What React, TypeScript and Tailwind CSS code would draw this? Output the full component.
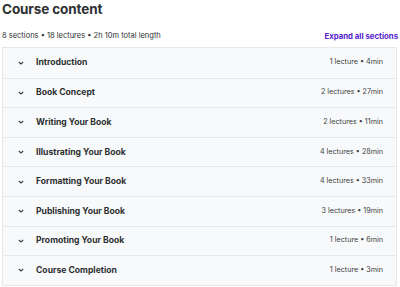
import React from "react";

const sections = [
  ["Introduction", "1 lecture • 4min"],
  ["Book Concept", "2 lectures • 27min"],
  ["Writing Your Book", "2 lectures • 11min"],
  ["Illustrating Your Book", "4 lectures • 28min"],
  ["Formatting Your Book", "4 lectures • 33min"],
  ["Publishing Your Book", "3 lectures • 19min"],
  ["Promoting Your Book", "1 lecture • 6min"],
  ["Course Completion", "1 lecture • 3min"],
];

function Chevron() {
  return (
    <svg width="8" height="8" viewBox="0 0 8 8" className="shrink-0">
      <path d="M1.8 3 L4 5 L6.2 3" fill="none" stroke="#3d3f41" strokeWidth="1.1" />
    </svg>
  );
}

export default function App() {
  return (
    <div className="w-[400px] h-[287px] bg-white overflow-hidden pl-[2px] pr-[3px] text-[#2d2f31]" style={{ fontFamily: "Inter, 'Liberation Sans', sans-serif" }}>
      <div className="text-[13.5px] font-bold leading-[16px] pt-[1px] tracking-[-0.1px]">Course content</div>
      <div className="flex items-center justify-between mt-[13px] mr-[-3px] h-[12px]">
        <span className="text-[7.5px] leading-[12px] text-[#2d2f31]">8 sections • 18 lectures • 2h 10m total length</span>
        <span className="text-[7.8px] leading-[12px] font-bold text-[#5624d0] mr-[2px]">Expand all sections</span>
      </div>
      <div className="mt-[5px] border border-[#e5e7eb] bg-[#f7f9fa]">
        {sections.map(([t, m], i) => (
          <div key={t} className={`flex items-center h-[29.6px] pl-[14px] pr-[13px] ${i > 0 ? "border-t border-[#e8e9eb]" : ""}`}>
            <Chevron />
            <span className="ml-[11px] text-[8.6px] font-bold text-[#2d2f31]">{t}</span>
            <span className="ml-auto text-[7.2px] text-[#3d3f41]">{m}</span>
          </div>
        ))}
      </div>
    </div>
  );
}
